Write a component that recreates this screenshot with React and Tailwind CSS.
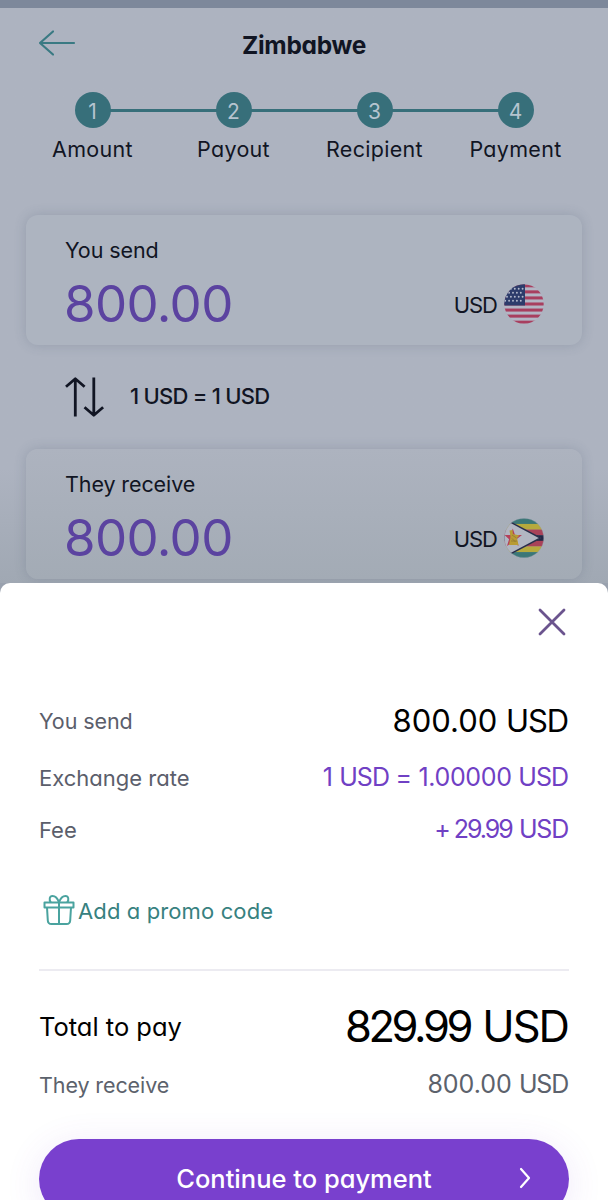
import React from 'react';
import clsx from 'clsx';

const steps = ['Amount', 'Payout', 'Recipient', 'Payment'];

function BackArrow() {
  return (
    <svg width="38" height="28" viewBox="0 0 38 28" fill="none" stroke="#3a7a83" strokeWidth="2.2" strokeLinecap="round" strokeLinejoin="round">
      <path d="M36 14H2M15 2.500L2 14L15 25.500" />
    </svg>
  );
}

function SwapIcon() {
  return (
    <svg width="40" height="40" viewBox="0 0 40 40" fill="none" stroke="#111523" strokeWidth="2.8" strokeLinejoin="round">
      <path d="M10.300 39.500V2M1 9.800L10.300 1.800L19.600 9.800" />
      <path d="M28.800 0.500V38M19.500 30.200L28.800 38.200L38.100 30.200" />
    </svg>
  );
}

function GiftIcon() {
  return (
    <svg width="32" height="32" viewBox="0 0 32 32" fill="none" stroke="#4aa39f" strokeWidth="2" strokeLinejoin="round">
      <path d="M1.500 8.500H30.500V13.500H1.500Z" />
      <path d="M4 13.500L4.800 26.500Q5 30 8.500 30H23.500Q27 30 27.200 26.500L28 13.500" />
      <path d="M16 8.500V30" />
      <path d="M16 8.500C14.500 4 12 2 9.500 2C6.500 2 5.800 5.500 7.800 8.500M16 8.500C17.500 4 20 2 22.500 2C25.500 2 26.200 5.500 24.200 8.500" />
    </svg>
  );
}

function UsFlag() {
  const stars = [];
  for (let r = 0; r < 4; r++) {
    for (let c = 0; c < 6; c++) stars.push([c * 3.9 + (r % 2 ? 1.2 : 3), 4.7 + r * 4]);
  }
  return (
    <svg width="40" height="40" viewBox="0 0 40 40">
      <defs><clipPath id="us"><circle cx="20" cy="20" r="19.700" /></clipPath></defs>
      <g clipPath="url(#us)">
        <rect width="40" height="40" fill="#b3b6c5" />
        {[0, 1, 2, 3, 4, 5, 6].map((i) => <rect key={i} y={0.3 + i * 6.06} width="40" height="3.030" fill="#a83f5f" />)}
        <rect width="21" height="21.500" fill="#2d3c6b" />
        {stars.filter(([x]) => x < 20).map(([x, y]) => <circle key={`${x}-${y}`} cx={x} cy={y} r="0.950" fill="#b3b9cc" />)}
      </g>
    </svg>
  );
}

function ZimbabweFlag() {
  const stripes = ['#3b7777', '#b6aa3d', '#a94259', '#222745', '#a94259', '#b6aa3d', '#3b7777'];
  return (
    <svg width="40" height="40" viewBox="0 0 40 40">
      <defs><clipPath id="zw"><circle cx="20" cy="20" r="19.700" /></clipPath></defs>
      <g clipPath="url(#zw)">
        {stripes.map((fill, i) => <rect key={i} y={0.3 + i * 5.63} width="40" height="5.800" fill={fill} />)}
        <path d="M0 0V40L8 35.500L37 20L8 4.500Z" fill="#b2b6c2" />
        <path d="M6 3.800L36.500 20L6 36.200" fill="none" stroke="#292e4a" strokeWidth="1.500" />
        <path d="M8.800 10.500L11 17H18L12.500 21.200L14.600 28L8.800 24L3 28L5.100 21.200L0.500 17H6.600Z" fill="#b5405a" />
        <path d="M5.500 12.500L8.500 12L9 16L15.500 17.500L13 20L14.500 27H5L6.500 19Z" fill="#b89b35" />
        <path d="M8 17L12.500 20M7 23H13M8 20.500L11.500 24" stroke="#8a7434" strokeWidth="0.700" />
      </g>
      <circle cx="20" cy="20" r="19.500" fill="none" stroke="#8f98a6" strokeOpacity="0.500" strokeWidth="0.500" />
    </svg>
  );
}

function Stepper() {
  return (
    <div className="relative mt-[33px] flex px-[22px]">
      <div className="absolute left-[92px] right-[92px] top-[17px] h-[3px] bg-[#376f7a]" />
      {steps.map((label, i) => (
        <div key={label} className="relative flex flex-1 flex-col items-center">
          <div className="flex size-9 items-center justify-center rounded-full bg-[#376f7a] pt-[2px] text-[21px] leading-none text-[#b5c4cf]">{i + 1}</div>
          <span className="mt-[7px] text-[21.5px] leading-7 tracking-[0.3px] text-[#111523]">{label}</span>
        </div>
      ))}
    </div>
  );
}

function AmountCard({ label, amount, flag, className }) {
  return (
    <div className={clsx('mx-[26px] h-[130px] rounded-xl pl-[38px] pr-[38px] pt-[21px] shadow-[0_0_12px_rgba(70,80,105,0.22)]', className)}>
      <p className="pl-px text-[21.5px] leading-7 tracking-[-0.1px] text-[#111523]">{label}</p>
      <div className="mt-[10px] flex h-[60px] items-center justify-between">
        <span className="text-[51px] leading-[60px] tracking-[-0.6px] text-[#5b43a0]">{amount}</span>
        <div className="flex items-center gap-[7px]">
          <span className="pt-[2px] text-[22px] leading-7 tracking-[-1px] text-[#111523]">USD</span>
          {flag}
        </div>
      </div>
    </div>
  );
}

function SummaryRow({ label, children, className, labelClass, valueClass }) {
  return (
    <div className={clsx('flex items-center justify-between', className)}>
      <span className={labelClass}>{label}</span>
      <span className={clsx('whitespace-nowrap pr-px', valueClass)}>{children}</span>
    </div>
  );
}

export default function App() {
  return (
    <div className="flex h-[1200px] w-[608px] flex-col overflow-hidden bg-[#99a1ae] font-['Inter',sans-serif] [font-feature-settings:'cv11']">
      {/* Dimmed page behind the sheet */}
      <div className="h-[583px] shrink-0 border-t-8 border-[#7d889b] bg-linear-to-b from-[#adb3c0] from-80% to-[#a0a8b3]">
        <div className="grid h-[51px] grid-cols-[1fr_auto_1fr] items-center px-[38px] pt-[17px]">
          <BackArrow />
          <h1 className="pt-[4px] text-[24.5px] font-bold leading-8 tracking-[-0.3px] text-[#111523]">Zimbabwe</h1>
        </div>
        <Stepper />
        <AmountCard label="You send" amount="800.00" flag={<UsFlag />} className="mt-[51.500px] bg-[#adb4c0]" />
        <div className="flex h-[104px] items-center gap-[25px] pl-[65px]">
          <SwapIcon />
          <span className="pb-[2px] text-[22px] font-medium leading-7 tracking-[-0.75px] text-[#111523]">1 USD = 1 USD</span>
        </div>
        <AmountCard label="They receive" amount="800.00" flag={<ZimbabweFlag />} className="bg-linear-to-b from-[#adb3bf] to-[#a3abb5]" />
      </div>

      {/* Payment summary sheet */}
      <div className="flex-1 rounded-t-[10px] bg-white px-[39px]">
        <div className="flex h-[77px] items-center justify-end pr-[2px]">
          <svg width="30" height="30" viewBox="0 0 30 30" stroke="#6b548e" strokeWidth="2.8" strokeLinecap="round">
            <path d="M3 3L27 27M27 3L3 27" />
          </svg>
        </div>
        <SummaryRow className="mt-[41px] h-[41px]" label="You send" labelClass="text-[21.5px] tracking-[-0.1px] text-[#5b5e6b]" valueClass="text-[31px] text-black">
          800.00 <span className="tracking-[-1.1px]">USD</span>
        </SummaryRow>
        <SummaryRow className="mt-[16px] h-[40px]" label="Exchange rate" labelClass="text-[22px] text-[#5b5e6b]" valueClass="text-[25px] tracking-[-0.35px] text-[#7040c4]">
          1 <span className="tracking-[-1px]">USD</span> = 1.00000 <span className="tracking-[-1px]">USD</span>
        </SummaryRow>
        <SummaryRow className="mt-[12px] h-[40px]" label="Fee" labelClass="text-[22px] text-[#5b5e6b]" valueClass="text-[25px] text-[#7040c4]">
          <span className="tracking-[-2px]">+ 29.99</span> <span className="tracking-[-1.2px]">USD</span>
        </SummaryRow>
        <div className="mt-[44px] flex h-[32px] items-center gap-[3px] pl-1 text-[22px] tracking-[0.12px] text-[#37817f]">
          <GiftIcon />
          <span className="pt-[2px]">Add a promo code</span>
        </div>
        <hr className="mt-[43px] border-t-2 border-[#ecebf1]" />
        <SummaryRow className="mt-[25px] h-[62px]" label="Total to pay" labelClass="text-[25.5px] text-black" valueClass="text-[43.5px] text-black">
          <span className="tracking-[-3.4px]">829.99</span> <span className="tracking-[-2px]">USD</span>
        </SummaryRow>
        <SummaryRow className="mt-[6px] h-[42px]" label="They receive" labelClass="text-[21.5px] tracking-[-0.1px] text-[#5c626c]" valueClass="text-[25px] text-[#5c626c]">
          800.00 <span className="tracking-[-1.2px]">USD</span>
        </SummaryRow>
        <button className="relative mt-[33px] flex h-[80px] w-full items-center justify-center rounded-full bg-[#7940ce] text-[25.5px] font-medium text-white shadow-[0_6px_36px_rgba(121,64,206,0.12)]">
          Continue to payment
          <svg className="absolute right-[37px] top-[28px]" width="14" height="22" viewBox="0 0 14 22" fill="none" stroke="white" strokeWidth="2.2" strokeLinecap="round" strokeLinejoin="round">
            <path d="M3 2L11 11L3 20" />
          </svg>
        </button>
      </div>
    </div>
  );
}
